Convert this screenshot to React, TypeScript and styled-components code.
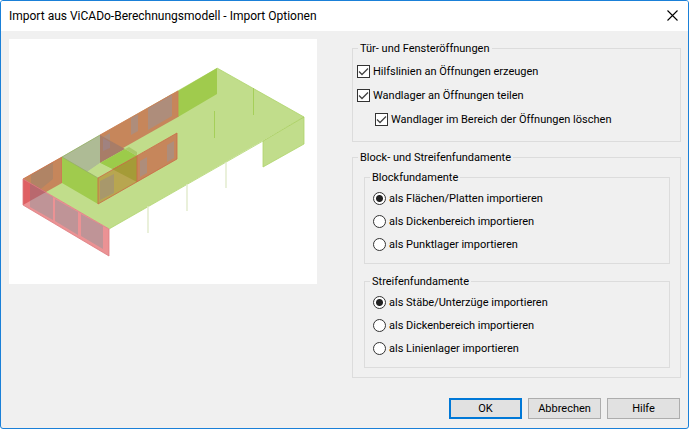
import React, { useState } from "react";
import styled, { createGlobalStyle } from "styled-components";

const GlobalStyle = createGlobalStyle`
  * { box-sizing: border-box; }
  body {
    margin: 0;
    background: #fff;
    color: #000;
    font-family: Roboto, Tahoma, sans-serif;
    font-size: 11px;
    line-height: 13px;
  }
`;

const Dialog = styled.main`
  display: flex;
  flex-direction: column;
  min-height: 100vh;
  border: 1px solid #1a80d8;
  border-radius: 3px;
  background: #f0f0f0;
  overflow: hidden;
`;

const TitleBar = styled.header`
  display: flex;
  align-items: center;
  justify-content: space-between;
  height: 30px;
  padding: 0 8px;
  background: #fff;
`;

const Title = styled.h1`
  margin: 0;
  font-size: 12px;
  font-weight: 400;
  line-height: 16px;
`;

const CloseButton = styled.button`
  display: flex;
  padding: 0 2px 2px;
  border: 0;
  background: none;
`;

const Content = styled.div`
  display: grid;
  grid-template-columns: 308fr 329fr;
  column-gap: 35px;
  align-items: start;
  padding: 8px 7px 0 8px;
`;

const Preview = styled.svg`
  display: block;
  width: 100%;
  background: #fff;
`;

const Options = styled.form`
  display: flex;
  flex-direction: column;
  gap: 9px;
  padding-top: 3px;
`;

const Group = styled.fieldset`
  min-width: 0;
  margin: 0;
  padding: 0;
  border: 1px solid #dcdcdc;
`;

const Legend = styled.legend`
  margin-left: 5px;
  padding: 0 2px;
`;

const Stack = styled.div<{ $gap: number; $pad: string }>`
  display: flex;
  flex-direction: column;
  gap: ${(p) => p.$gap}px;
  padding: ${(p) => p.$pad};
`;

const Choice = styled.label<{ $indent?: boolean }>`
  display: flex;
  align-items: center;
  gap: 3px;
  margin-left: ${(p) => (p.$indent ? 18 : 0)}px;
`;

const CheckInput = styled.input.attrs({ type: "checkbox" })`
  appearance: none;
  flex: none;
  width: 13px;
  height: 13px;
  margin: 0;
  border: 1px solid #333;
  background: #fff;
  &:checked {
    background: #fff
      url("data:image/svg+xml,%3Csvg xmlns='http://www.w3.org/2000/svg' viewBox='0 0 11 11'%3E%3Cpath d='M1 5.5 4 8.5 10 2.5' fill='none' stroke='%23444' stroke-width='1.3'/%3E%3C/svg%3E");
  }
`;

const RadioInput = styled.input.attrs({ type: "radio" })`
  appearance: none;
  flex: none;
  width: 13px;
  height: 13px;
  margin: 0;
  border: 1px solid #333;
  border-radius: 50%;
  background: #fff;
  &:checked {
    background: radial-gradient(circle, #222 0 3px, #fff 4px);
  }
`;

const Footer = styled.footer`
  display: flex;
  justify-content: flex-end;
  gap: 6px;
  margin-top: auto;
  padding: 18px 8px 9px;
`;

const Button = styled.button<{ $primary?: boolean }>`
  width: 73px;
  height: 21px;
  padding: 0;
  border: ${(p) => (p.$primary ? "2px solid #0078d7" : "1px solid #adadad")};
  background: #e1e1e1;
  color: #000;
  font: inherit;
`;

const SLAB = "#c1dd8b";
const GREEN = "#a0cb4d";
const BRICK = "#c6865b";
const PANE = "#ae8d7b";
const RED_PANE = "#bf9497";

function ModelPreview() {
  return (
    <Preview viewBox="9 39 308 245" role="img" aria-label="3D-Modell">
      <path d="M217 68 304 117 109 229 23 179Z" fill={SLAB} />
      <path d="M304 117V144L263 167V141Z" fill={SLAB} />
      <path d="M217 68 304 117V144L263 167V141L109 229" fill="none" stroke="#afd46b" strokeWidth=".8" />
      <path d="M304 117 263 141" stroke="#a3cb55" strokeWidth=".8" />
      <path d="M253.500 88V115M214.500 111V138" stroke="#a5cf59" />
      <path d="M226 162V188M187 184V211M148 206V233" stroke="#dfe9c8" strokeWidth="1.300" />

      <path d="M178 91 217 68V94L178 117Z" fill={GREEN} />
      <path d="M100 135 178 91V117L100 161Z" fill={BRICK} />
      <path d="M103 137 110 133V145L103 150ZM131 118 138 114V131L131 135ZM148 108 172 94V116L148 130Z" fill={PANE} />
      <path d="M100 135 178 91V117" fill="none" stroke="#d07a55" strokeWidth=".8" />

      <path d="M23 179 62 157V183L23 205Z" fill={BRICK} />
      <path d="M31 175 53 162V179L31 197Z" fill="#b08465" />
      <path d="M62 157V183" stroke="#d07350" />

      <path d="M62 157 100 135V163L87 172Z" fill="#aebb95" />
      <path d="M100 135 125 149 100 163Z" fill="#a87d68" />
      <path d="M103 138 110 142V148L103 151Z" fill="#a08280" />
      <path d="M100 163 125 149 137 156 112 169Z" fill="#9ccb4a" />
      <path d="M125 149 129 147 137 152V156Z" fill="#aac96a" />
      <path d="M87 172 100 163 112 169 98 178Z" fill={SLAB} />
      <path d="M62 157 98 178V204L62 183Z" fill={GREEN} />
      <path d="M62 157 100 135M62 157 98 178" stroke="#91aa66" strokeWidth=".7" />

      <path d="M98 178 137 156V182L98 204Z" fill="#b8a650" />
      <path d="M112 169 137 156V182Z" fill="#a59b37" />
      <path d="M100 181 114 174V193L100 200Z" fill="#a8986b" />
      <path d="M137 156 177 133V159L137 182Z" fill={BRICK} />
      <path d="M140 161 147 157V173L140 177ZM167 145 174 141V158L167 162Z" fill={PANE} />
      <path d="M98 178 177 133V159L98 204ZM137 156V182" fill="none" stroke="#cc6a46" strokeWidth=".8" />

      <path d="M23 179 109 229V256L23 205Z" fill="#eb9294" />
      <path d="M23 179 46 192 23 205Z" fill="#df6063" />
      <path d="M30 184 53 197V220L30 207ZM55 199 78 212V235L55 221ZM81 214 103 226V249L81 236Z" fill={RED_PANE} />
      <path d="M30 183 46 192 30 201Z" fill="#b9686e" />
      <path d="M23 179 62 157" stroke="#d16e4d" strokeWidth=".8" />
      <path d="M23 179 109 229V256L23 205Z" fill="none" stroke="#dd7c80" strokeWidth=".8" />
    </Preview>
  );
}

type RadioGroupProps = { legend: string; name: string; options: string[] };

function RadioGroup({ legend, name, options }: RadioGroupProps) {
  const [selected, setSelected] = useState(0);
  return (
    <Group>
      <Legend>{legend}</Legend>
      <Stack $gap={10} $pad="8px 8px 12px">
        {options.map((option, i) => (
          <Choice key={option}>
            <RadioInput name={name} checked={selected === i} onChange={() => setSelected(i)} />
            {option}
          </Choice>
        ))}
      </Stack>
    </Group>
  );
}

export default function App() {
  return (
    <>
      <GlobalStyle />
      <Dialog>
        <TitleBar>
          <Title>Import aus ViCADo-Berechnungsmodell - Import Optionen</Title>
          <CloseButton type="button" aria-label="Schließen">
            <svg width="11" height="11" viewBox="0 0 11 11">
              <path d="M.5.5 10.500 10.500M10.500.5.5 10.500" stroke="#000" strokeWidth="1.100" />
            </svg>
          </CloseButton>
        </TitleBar>
        <Content>
          <ModelPreview />
          <Options id="import-options">
            <Group>
              <Legend>Tür- und Fensteröffnungen</Legend>
              <Stack $gap={11} $pad="10px 4px 15px">
                <Choice>
                  <CheckInput defaultChecked />
                  Hilfslinien an Öffnungen erzeugen
                </Choice>
                <Choice>
                  <CheckInput defaultChecked />
                  Wandlager an Öffnungen teilen
                </Choice>
                <Choice $indent>
                  <CheckInput defaultChecked />
                  Wandlager im Bereich der Öffnungen löschen
                </Choice>
              </Stack>
            </Group>
            <Group>
              <Legend>Block- und Streifenfundamente</Legend>
              <Stack $gap={11} $pad="7px 10px 9px 11px">
                <RadioGroup
                  legend="Blockfundamente"
                  name="block"
                  options={["als Flächen/Platten importieren", "als Dickenbereich importieren", "als Punktlager importieren"]}
                />
                <RadioGroup
                  legend="Streifenfundamente"
                  name="streifen"
                  options={["als Stäbe/Unterzüge importieren", "als Dickenbereich importieren", "als Linienlager importieren"]}
                />
              </Stack>
            </Group>
          </Options>
        </Content>
        <Footer>
          <Button type="submit" form="import-options" $primary>OK</Button>
          <Button type="button">Abbrechen</Button>
          <Button type="button">Hilfe</Button>
        </Footer>
      </Dialog>
    </>
  );
}
